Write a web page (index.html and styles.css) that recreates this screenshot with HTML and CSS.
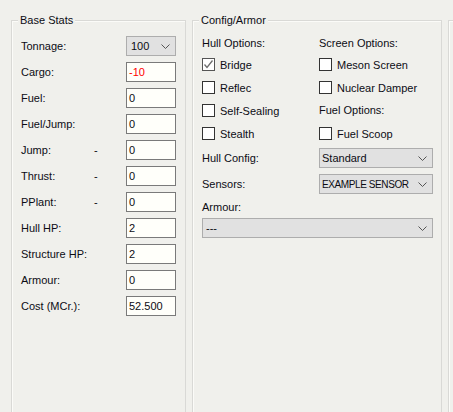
FILE: index.html
```html
<!DOCTYPE html>
<html lang="en">
<head>
  <meta charset="UTF-8" />
  <title>Ship Designer</title>
  <link rel="stylesheet" href="styles.css">
</head>
<body>

  <div class="ventana">

    <div class="grupo stats">
      <span class="titulo">Base Stats</span>
      <div class="filas">
        <div class="fila">
          <span class="etiqueta">Tonnage:</span><span class="guion"></span>
          <div class="combo">100
            <svg class="flecha" width="9" height="5" viewBox="0 0 9 5"><polyline points="0.5,0.5 4.5,4.5 8.5,0.5" fill="none" stroke="#555" stroke-width="1"/></svg>
          </div>
        </div>
        <div class="fila">
          <span class="etiqueta">Cargo:</span><span class="guion"></span>
          <div class="campo rojo">-10</div>
        </div>
        <div class="fila">
          <span class="etiqueta">Fuel:</span><span class="guion"></span>
          <div class="campo">0</div>
        </div>
        <div class="fila">
          <span class="etiqueta">Fuel/Jump:</span><span class="guion"></span>
          <div class="campo">0</div>
        </div>
        <div class="fila">
          <span class="etiqueta">Jump:</span><span class="guion">-</span>
          <div class="campo">0</div>
        </div>
        <div class="fila">
          <span class="etiqueta">Thrust:</span><span class="guion">-</span>
          <div class="campo">0</div>
        </div>
        <div class="fila">
          <span class="etiqueta">PPlant:</span><span class="guion">-</span>
          <div class="campo">0</div>
        </div>
        <div class="fila">
          <span class="etiqueta">Hull HP:</span><span class="guion"></span>
          <div class="campo">2</div>
        </div>
        <div class="fila">
          <span class="etiqueta">Structure HP:</span><span class="guion"></span>
          <div class="campo">2</div>
        </div>
        <div class="fila">
          <span class="etiqueta">Armour:</span><span class="guion"></span>
          <div class="campo">0</div>
        </div>
        <div class="fila">
          <span class="etiqueta">Cost (MCr.):</span><span class="guion"></span>
          <div class="campo">52.500</div>
        </div>
      </div>
    </div>

    <div class="grupo config">
      <span class="titulo">Config/Armor</span>
      <div class="opciones">
        <span class="cabecera">Hull Options:</span>
        <span class="cabecera">Screen Options:</span>

        <label class="check"><span class="caja marcada">
          <svg width="11" height="11" viewBox="0 0 11 11"><polyline points="1.5,5.5 4,8.5 9.5,1.5" fill="none" stroke="#6d6d6d" stroke-width="1.3"/></svg>
        </span>Bridge</label>
        <label class="check"><span class="caja"></span>Meson Screen</label>

        <label class="check"><span class="caja"></span>Reflec</label>
        <label class="check"><span class="caja"></span>Nuclear Damper</label>

        <label class="check"><span class="caja"></span>Self-Sealing</label>
        <span class="cabecera">Fuel Options:</span>

        <label class="check"><span class="caja"></span>Stealth</label>
        <label class="check"><span class="caja"></span>Fuel Scoop</label>
      </div>

      <div class="ajustes">
        <span class="etiqueta">Hull Config:</span>
        <div class="combo">Standard
          <svg class="flecha" width="9" height="5" viewBox="0 0 9 5"><polyline points="0.5,0.5 4.5,4.5 8.5,0.5" fill="none" stroke="#555" stroke-width="1"/></svg>
        </div>
        <span class="etiqueta">Sensors:</span>
        <div class="combo"><span class="estrecho">EXAMPLE SENSOR</span>
          <svg class="flecha" width="9" height="5" viewBox="0 0 9 5"><polyline points="0.5,0.5 4.5,4.5 8.5,0.5" fill="none" stroke="#555" stroke-width="1"/></svg>
        </div>
      </div>

      <div class="blindaje">
        <span class="etiqueta">Armour:</span>
        <div class="combo">---
          <svg class="flecha" width="9" height="5" viewBox="0 0 9 5"><polyline points="0.5,0.5 4.5,4.5 8.5,0.5" fill="none" stroke="#555" stroke-width="1"/></svg>
        </div>
      </div>
    </div>

    <div class="grupo extra"></div>

  </div>

</body>
</html>
```

FILE: styles.css
```css
html, body {
  margin: 0;
  height: 100%;
  overflow: hidden;
}

body {
  background-color: #f0f0ec;
  font-family: 'Liberation Sans', Arial, sans-serif;
  font-size: 11px;
  color: #0c0c14;
}

.ventana {
  display: flex;
  gap: 6px;
  padding: 20px 0 0 11px;
}

.grupo {
  position: relative;
  flex-shrink: 0;
  box-sizing: border-box;
  height: 420px;
  border: 1px solid #d9d9d6;
  box-shadow: inset 1px 1px 0 #fbfbf8;
}

.titulo {
  position: absolute;
  top: -8px;
  left: 6px;
  padding: 0 2px;
  background-color: #f0f0ec;
  line-height: 15px;
}

/* Base Stats */
.stats {
  width: 175px;
  padding: 15px 9px 0 9px;
}

.filas {
  display: flex;
  flex-direction: column;
  gap: 6px;
}

.fila {
  display: grid;
  grid-template-columns: 72px 1fr 50px;
  align-items: center;
  height: 20px;
}

.guion {
  padding-left: 1px;
}

.campo {
  box-sizing: border-box;
  height: 20px;
  line-height: 18px;
  padding-left: 2px;
  border: 1px solid #7a7a7a;
  background-color: #fffffa;
}

.rojo {
  color: #ff0000;
}

.combo {
  position: relative;
  box-sizing: border-box;
  height: 20px;
  line-height: 18px;
  padding-left: 4px;
  border: 1px solid #adadad;
  background-color: #e1e1e1;
  white-space: nowrap;
}

.flecha {
  position: absolute;
  right: 5px;
  top: 7px;
}

/* Config/Armor */
.config {
  width: 250px;
  padding: 12px 8px 0 9px;
}

.opciones {
  display: grid;
  grid-template-columns: 117px 1fr;
  grid-template-rows: 20px repeat(4, 23px);
  align-items: center;
}

.cabecera {
  line-height: 15px;
}

.check {
  display: flex;
  align-items: center;
  gap: 5px;
}

.caja {
  box-sizing: border-box;
  width: 13px;
  height: 13px;
  border: 1px solid #333;
  background-color: #fff;
  display: flex;
  align-items: center;
  justify-content: center;
}

.caja.marcada {
  border-color: #555;
}

.ajustes {
  display: grid;
  grid-template-columns: 117px 1fr;
  row-gap: 6px;
  align-items: center;
  margin-top: 3px;
}

.ajustes .combo {
  padding-left: 2px;
}

.estrecho {
  font-size: 10px;
  letter-spacing: -0.4px;
}

.blindaje {
  display: flex;
  flex-direction: column;
  gap: 5px;
  margin-top: 7px;
}

.blindaje .combo {
  padding-left: 3px;
}

.extra {
  width: 40px;
}
```
